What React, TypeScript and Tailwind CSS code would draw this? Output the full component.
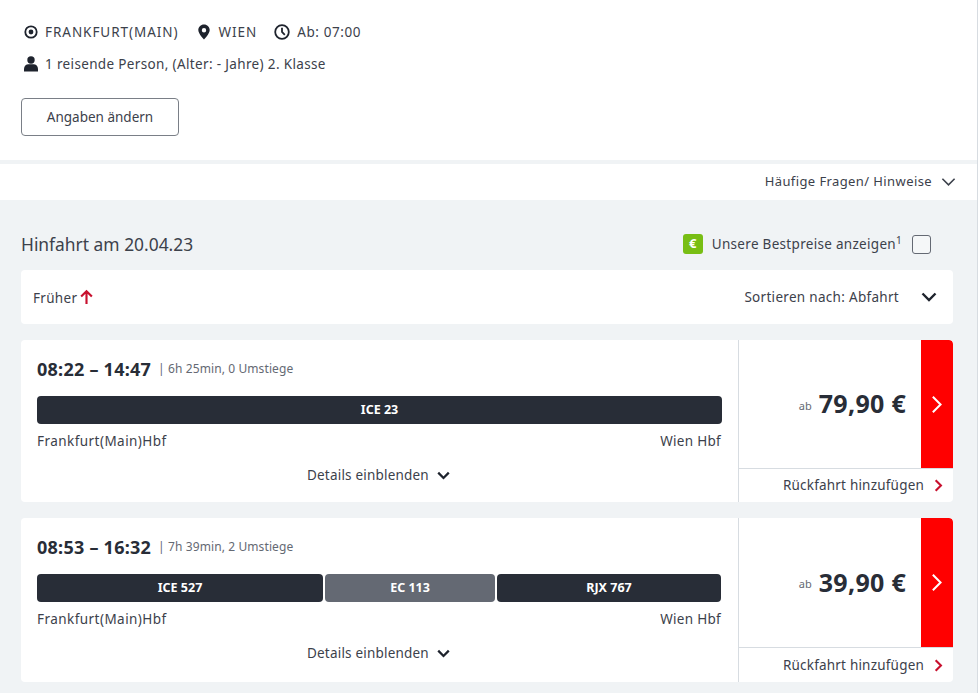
import React from "react";

const font = { fontFamily: '"Noto Sans", sans-serif' };

function Chevron({ className, sw = 2 }: { className: string; sw?: number }) {
  return (
    <svg viewBox="0 0 16 10" className={className} fill="none" stroke="currentColor" strokeWidth={sw}>
      <path d="M1.5 1.5 8 8l6.5-6.5" />
    </svg>
  );
}

function Right({ className, sw = 2 }: { className: string; sw?: number }) {
  return (
    <svg viewBox="0 0 10 16" className={className} fill="none" stroke="currentColor" strokeWidth={sw}>
      <path d="M1.5 1.5 8 8l-6.5 6.5" />
    </svg>
  );
}

type Seg = { label: string; grow: string; light?: boolean };

function Card({ time, info, segs, price, h, bottom, detailsPad }: { time: string; info: string; segs: Seg[]; price: string; h: string; bottom: string; detailsPad: string }) {
  return (
    <div className={`flex ${h} bg-white rounded-[4px] overflow-hidden`}>
      <div className="w-[718px] shrink-0 border-r border-[#d7dce1] pl-4 pr-4 pt-[16px] flex flex-col">
        <div className="flex items-baseline h-[24px]">
          <span className="text-[18px] font-bold text-[#282d37] tracking-[0.25px]">{time}</span>
          <span className="text-[12px] text-[#646973] ml-[7px] tracking-[0.1px] relative top-[-3px]">| {info}</span>
        </div>
        <div className="flex gap-[2px] mt-[16px] h-[28px]">
          {segs.map((s) => (
            <div
              key={s.label}
              className={`${s.grow} ${s.light ? "bg-[#646973]" : "bg-[#282d37]"} rounded-[4px] flex items-center justify-center text-white text-[12.5px] font-bold`}
            >
              {s.label}
            </div>
          ))}
        </div>
        <div className="flex justify-between mt-[7px] pr-[1px] text-[13.5px] leading-[20px] text-[#3c414b] tracking-[0.45px]">
          <span>Frankfurt(Main)Hbf</span>
          <span className="tracking-[0.3px]">Wien Hbf</span>
        </div>
        <div className={`flex items-center mt-[14px] ${detailsPad} text-[13.5px] leading-[20px] text-[#3c414b] tracking-[0.2px]`}>
          <span>Details einblenden</span>
          <Chevron className="w-[13px] h-[9px] ml-[8px] text-[#1e232d]" sw={2.8} />
        </div>
      </div>
      <div className="flex-1 flex flex-col">
        <div className="flex flex-1">
          <div className="flex-1 flex items-center justify-end pr-[15px] gap-[7px]">
            <span className="text-[11px] text-[#646973] relative top-[2px]">ab</span>
            <span className="text-[25px] font-bold text-[#282d37] tracking-[0.3px]">{price}</span>
          </div>
          <div className="w-[32px] bg-[#ff0000] rounded-tr-[4px] flex items-center justify-center text-white">
            <Right className="w-[12px] h-[19px]" sw={1.7} />
          </div>
        </div>
        <div className={`${bottom} border-t border-[#d7dce1] flex items-center justify-end pr-[10px] gap-[10px] text-[13.5px] text-[#3c414b] tracking-[0.2px]`}>
          <span>Rückfahrt hinzufügen</span>
          <Right className="w-[9px] h-[13px] text-[#c8102e]" sw={2.6} />
        </div>
      </div>
    </div>
  );
}

export default function App() {
  return (
    <div style={font} className="w-[978px] h-[693px] overflow-hidden border-r border-[#d7dce1] bg-[#f0f3f5]">
      <div className="h-[160px] bg-white pl-[24px] pt-[21px] text-[13.5px] text-[#3c414b]">
        <div className="flex items-center h-[22px]">
          <svg viewBox="0 0 14 14" className="w-[14px] h-[14px] text-[#1e232d]">
            <circle cx="7" cy="7" r="5.7" fill="none" stroke="currentColor" strokeWidth="1.8" />
            <circle cx="7" cy="7" r="2.4" fill="currentColor" />
          </svg>
          <span className="ml-[7px] tracking-[0.95px]">FRANKFURT(MAIN)</span>
          <svg viewBox="0 0 14 16" className="w-[14px] h-[16px] ml-[19px] text-[#1e232d]">
            <path fillRule="evenodd" fill="currentColor" d="M7 .5C3.7.5 1.3 3 1.3 6.1 1.3 10 7 15.5 7 15.5s5.700-5.500 5.700-9.400C12.700 3 10.300.5 7 .5Zm0 3.500a2.200 2.200 0 1 1 0 4.400 2.200 2.200 0 0 1 0-4.400Z" />
          </svg>
          <span className="ml-[7px] tracking-[0.95px]">WIEN</span>
          <svg viewBox="0 0 16 16" className="w-[16px] h-[16px] ml-[17px] text-[#1e232d]" fill="none" stroke="currentColor">
            <circle cx="8" cy="8" r="6.800" strokeWidth="1.800" />
            <path d="M8 3.800V8l2.800 2.800" strokeWidth="1.800" />
          </svg>
          <span className="ml-[7px] tracking-[0.6px]">Ab: 07:00</span>
        </div>
        <div className="flex items-center h-[22px] mt-[10px]">
          <svg viewBox="0 0 14 16" className="w-[14px] h-[16px] text-[#1e232d]" fill="currentColor">
            <circle cx="7" cy="4" r="3.700" />
            <path d="M0 13c0-3 2-4.700 4.500-4.700h5C12 8.300 14 10 14 13v2.500H0Z" />
          </svg>
          <span className="ml-[7px] tracking-[0.35px]">1 reisende Person, (Alter: - Jahre) 2. Klasse</span>
        </div>
        <div className="-ml-[3px] mt-[23px] w-[158px] h-[38px] border border-[#7a7f87] rounded-[4px] flex items-center justify-center">
          Angaben ändern
        </div>
      </div>
      <div className="h-[4px] bg-[#f0f3f5]" />
      <div className="h-[36px] bg-white flex items-center justify-end pr-[21px] gap-[9px] text-[13px] text-[#3c414b] tracking-[0.4px]">
        <span>Häufige Fragen/ Hinweise</span>
        <Chevron className="w-[15px] h-[10px] text-[#3c414b]" sw={1.7} />
      </div>
      <div className="px-[21px] pr-[24px]">
        <div className="flex items-center justify-between h-[70px] pt-[18px] pr-[22px]">
          <span className="text-[17.4px] text-[#3c414b]">Hinfahrt am 20.04.23</span>
          <div className="flex items-center">
            <span className="w-[20px] h-[20px] rounded-[3px] bg-[#78be14] text-white text-[13px] font-bold flex items-center justify-center">€</span>
            <span className="ml-[9px] text-[13.500px] text-[#3c414b] tracking-[0.3px]">
              Unsere Bestpreise anzeigen<sup className="text-[10px]">1</sup>
            </span>
            <span className="ml-[10px] w-[19px] h-[19px] rounded-[3px] border border-[#646973] bg-[#f5f7f8]" />
          </div>
        </div>
        <div className="h-[54px] bg-white rounded-[4px] flex items-center justify-between pl-[12px] pr-[16px] text-[13.500px] text-[#3c414b] tracking-[0.3px]">
          <div className="flex items-center gap-[3px]">
            <span className="relative top-[1px]">Früher</span>
            <svg viewBox="0 0 12 14" className="w-[13px] h-[15px] text-[#c8102e] relative top-[-1px]" fill="none" stroke="currentColor" strokeWidth="2">
              <path d="M6 14V2M1 7l5-5 5 5" />
            </svg>
          </div>
          <div className="flex items-center gap-[22px]">
            <span>Sortieren nach: Abfahrt</span>
            <Chevron className="w-[16px] h-[10px] text-[#1e232d]" sw={2.400} />
          </div>
        </div>
        <div className="flex flex-col gap-[16px] mt-[16px]">
          <Card
            time="08:22 – 14:47"
            info="6h 25min, 0 Umstiege"
            segs={[{ label: "ICE 23", grow: "flex-1" }]}
            price="79,90 €"
            h="h-[162px]"
            bottom="h-[34px]"
            detailsPad="pl-[270px]"
          />
          <Card
            time="08:53 – 16:32"
            info="7h 39min, 2 Umstiege"
            segs={[
              { label: "ICE 527", grow: "w-[286px]" },
              { label: "EC 113", grow: "w-[170px]", light: true },
              { label: "RJX 767", grow: "w-[224px]" },
            ]}
            price="39,90 €"
            h="h-[164px]"
            bottom="h-[35px]"
            detailsPad="pl-[270px]"
          />
        </div>
      </div>
    </div>
  );
}
